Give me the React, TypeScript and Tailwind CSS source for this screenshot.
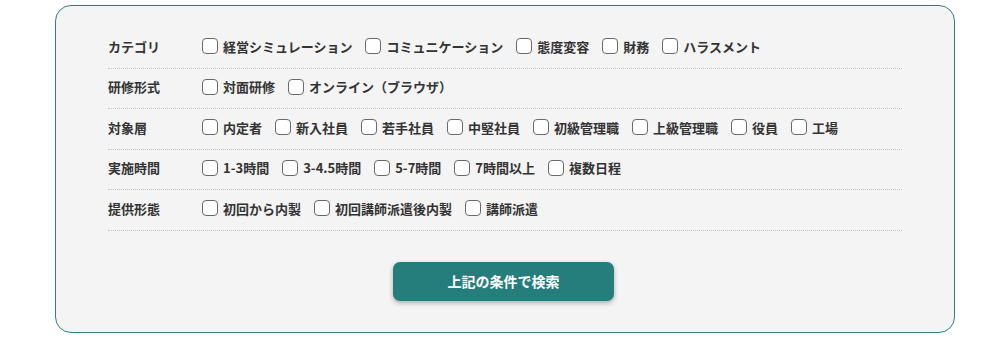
const rows: { label: string; items: string[] }[] = [
  { label: 'カテゴリ', items: ['経営シミュレーション', 'コミュニケーション', '態度変容', '財務', 'ハラスメント'] },
  { label: '研修形式', items: ['対面研修', 'オンライン（ブラウザ）'] },
  { label: '対象層', items: ['内定者', '新入社員', '若手社員', '中堅社員', '初級管理職', '上級管理職', '役員', '工場'] },
  { label: '実施時間', items: ['1-3時間', '3-4.5時間', '5-7時間', '7時間以上', '複数日程'] },
  { label: '提供形態', items: ['初回から内製', '初回講師派遣後内製', '講師派遣'] },
];

function CheckItem({ text }: { text: string }) {
  return (
    <label className="flex items-center gap-[5px] cursor-pointer">
      <span className="w-4 h-4 rounded-[4px] border border-[#6a6a6a] bg-white shrink-0" />
      <span className="whitespace-nowrap">{text}</span>
    </label>
  );
}

export default function App() {
  return (
    <div
      className="w-[1006px] h-[340px] bg-white pt-[5px] pl-[55px]"
      style={{ fontFamily: "'Noto Sans CJK JP', 'Noto Sans', sans-serif" }}
    >
      <div className="w-[900px] h-[328px] rounded-[16px] border border-[#2b8080] bg-[#f4f4f4] px-[52px] pt-[22px]">
        <div className="flex flex-col">
          {rows.map((row) => (
            <div
              key={row.label}
              className="h-[40.5px] flex items-center pb-[3px] border-b border-dotted border-[#c4c4c4] text-[13px] font-bold text-[#333] leading-none"
            >
              <div className="w-[94px] shrink-0">{row.label}</div>
              <div className="flex items-center gap-x-[13px]">
                {row.items.map((it) => (
                  <CheckItem key={it} text={it} />
                ))}
              </div>
            </div>
          ))}
        </div>
        <div className="flex justify-center pt-[31px] pr-[3px]">
          <button className="w-[221px] h-[39px] rounded-[7px] bg-[#267e7c] text-white text-[14px] font-bold shadow-[0_2px_5px_rgba(0,0,0,0.3)]">
            上記の条件で検索
          </button>
        </div>
      </div>
    </div>
  );
}
